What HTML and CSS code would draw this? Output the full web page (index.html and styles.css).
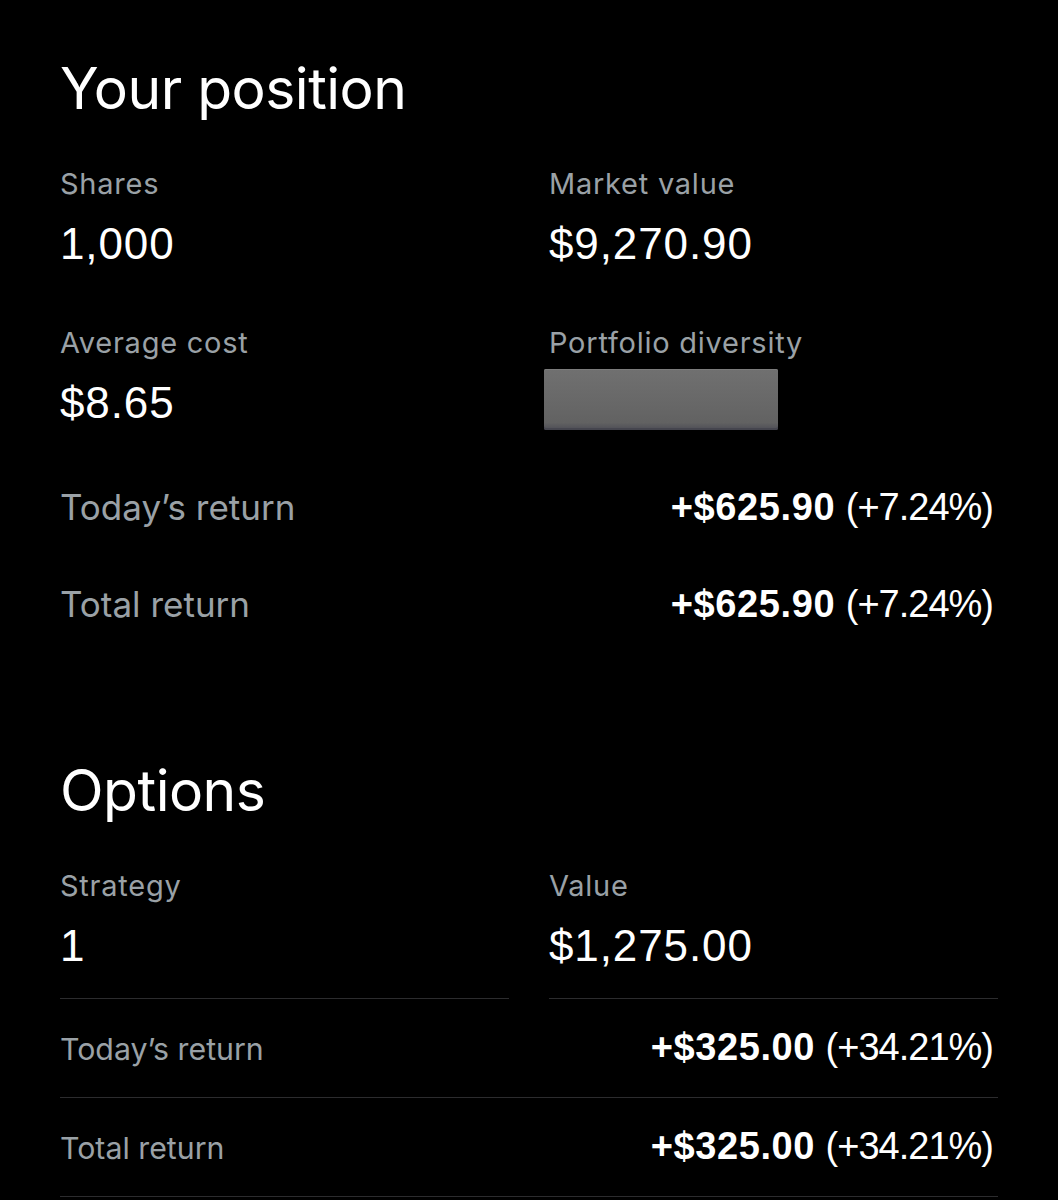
FILE: index.html
```html
<!DOCTYPE html>
<html lang="en">
<head>
<meta charset="utf-8">
<title>Your position</title>
<link rel="stylesheet" href="styles.css">
</head>
<body>
<main class="page">
  <section class="section">
    <h1 class="title">Your position</h1>
    <div class="grid">
      <div class="field">
        <div class="label">Shares</div>
        <div class="value">1,000</div>
      </div>
      <div class="field">
        <div class="label">Market value</div>
        <div class="value">$9,270.90</div>
      </div>
      <div class="field">
        <div class="label">Average cost</div>
        <div class="value">$8.65</div>
      </div>
      <div class="field">
        <div class="label">Portfolio diversity</div>
        <div class="value"><span class="redact"></span></div>
      </div>
    </div>
    <div class="rows">
      <div class="row">
        <span class="row-label">Today’s return</span>
        <span class="row-value"><b>+$625.90</b> <span class="pct">(+7.24%)</span></span>
      </div>
      <div class="row">
        <span class="row-label">Total return</span>
        <span class="row-value"><b>+$625.90</b> <span class="pct">(+7.24%)</span></span>
      </div>
    </div>
  </section>

  <section class="section options">
    <h1 class="title">Options</h1>
    <div class="grid grid-lined">
      <div class="field">
        <div class="label">Strategy</div>
        <div class="value">1</div>
      </div>
      <div class="field">
        <div class="label">Value</div>
        <div class="value">$1,275.00</div>
      </div>
    </div>
    <div class="rows rows-lined">
      <div class="row">
        <span class="row-label">Today’s return</span>
        <span class="row-value"><b>+$325.00</b> <span class="pct">(+34.21%)</span></span>
      </div>
      <div class="row">
        <span class="row-label">Total return</span>
        <span class="row-value"><b>+$325.00</b> <span class="pct">(+34.21%)</span></span>
      </div>
    </div>
  </section>
</main>
</body>
</html>
```

FILE: styles.css
```css
html, body {
  margin: 0;
  padding: 0;
  background: #000;
}

body {
  color: #fbfbfb;
  font-family: Inter, "Noto Sans", sans-serif;
}

.page {
  width: 938px;
  padding: 54px 60px 0 60px;
}

.title {
  margin: 0;
  font-family: Inter, sans-serif;
  font-weight: 400;
  font-size: 57px;
  line-height: 70px;
  letter-spacing: -0.5px;
  color: #fff;
}

.grid {
  display: grid;
  grid-template-columns: 449px 449px;
  column-gap: 40px;
  row-gap: 55px;
  margin-top: 42px;
}

.label {
  font-family: Inter, sans-serif;
  font-size: 29px;
  line-height: 36px;
  letter-spacing: 0.75px;
  color: #9aa1a6;
}

.value {
  margin-top: 16px;
  font-family: "Liberation Sans", Arial, sans-serif;
  font-size: 44px;
  line-height: 52px;
  letter-spacing: 0.9px;
  color: #fff;
}

.redact {
  display: block;
  width: 234px;
  height: 61px;
  margin: -8px 0 -1px -5px;
  border-radius: 2px;
  background: linear-gradient(180deg, #707070 0%, #676767 60%, #626262 88%, #4d4d56 100%);
  box-shadow: inset 0 1px 0 #7c7c7c, inset 0 -2px 0 #45454e;
}

.rows {
  margin-top: 30px;
}

.row {
  display: flex;
  justify-content: space-between;
  align-items: baseline;
  padding: 26px 5px 27px 0;
}

.row-label {
  font-family: Inter, sans-serif;
  font-size: 35px;
  line-height: 44px;
  color: #9aa1a6;
}

.row-value {
  font-family: "Liberation Sans", Arial, sans-serif;
  font-size: 38px;
  line-height: 44px;
  color: #fff;
}

.row-value b {
  font-weight: 700;
  letter-spacing: 0.6px;
}

.row-value .pct {
  letter-spacing: -1px;
}

.options {
  margin-top: 103px;
}

.grid-lined .field {
  padding-bottom: 26px;
  border-bottom: 1px solid #2c2c2e;
}

.rows-lined {
  margin-top: 0;
}

.rows-lined .row {
  padding: 26px 5px 26px 0;
  border-bottom: 1px solid #2c2c2e;
}

.rows-lined .row-label {
  font-size: 30.3px;
}
```
